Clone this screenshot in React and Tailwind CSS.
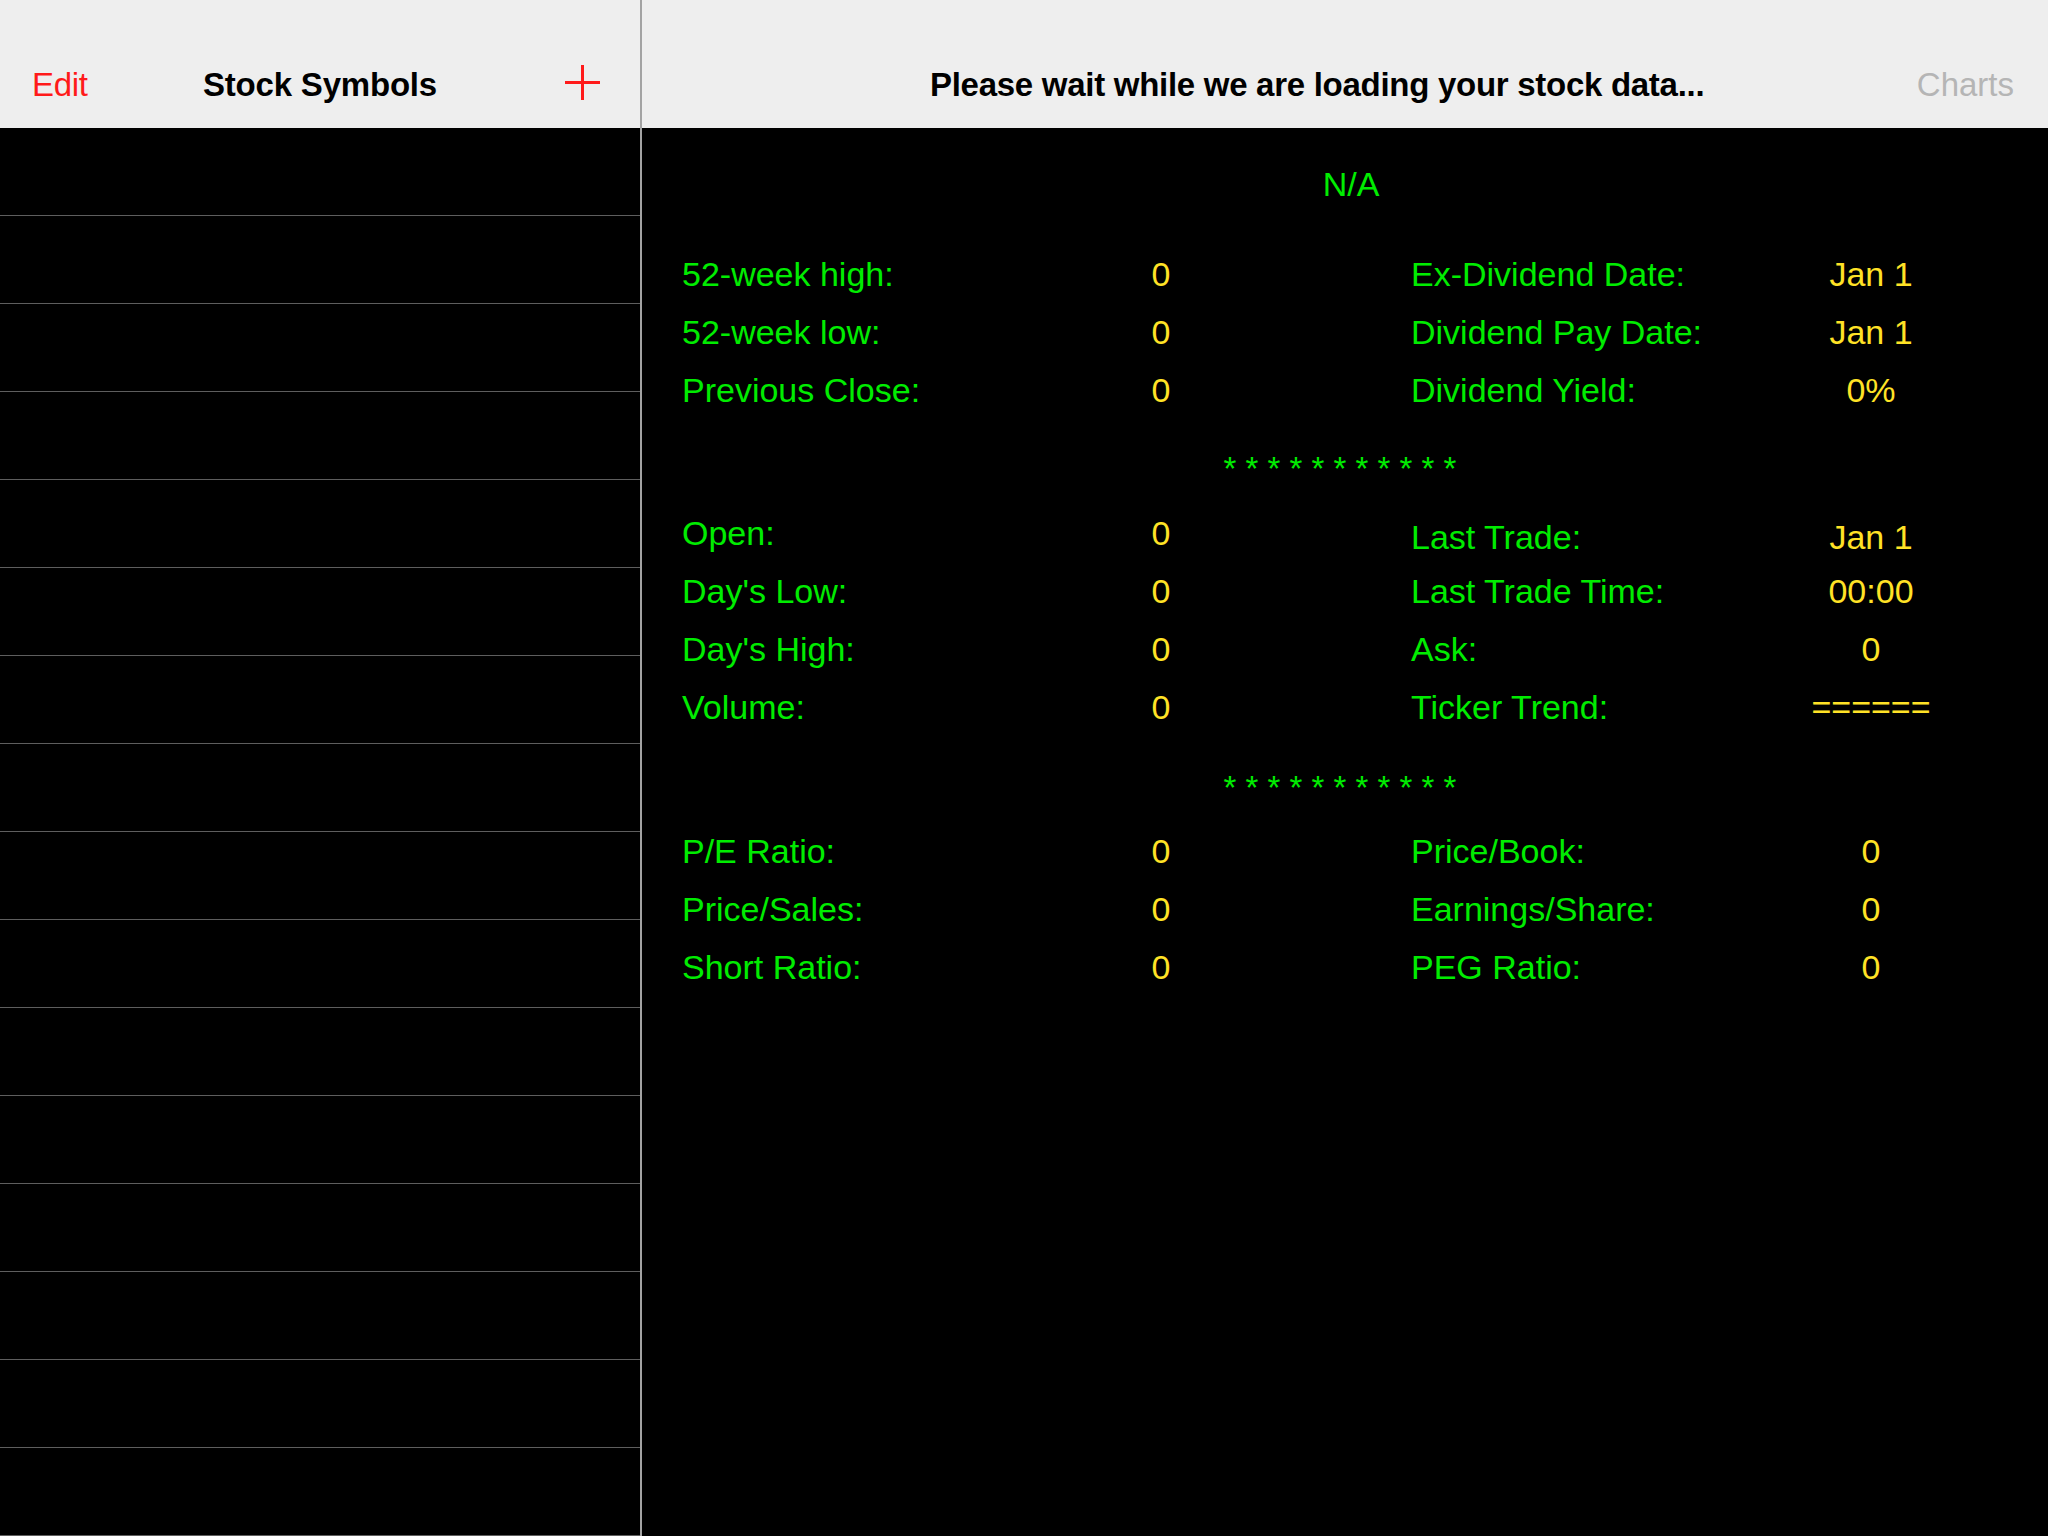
import React from 'react';

const GREEN = 'text-[#00ec00]';
const YELLOW = 'text-[#ffe226]';

const groups = [
  [
    ['52-week high:', '0', 'Ex-Dividend Date:', 'Jan 1'],
    ['52-week low:', '0', 'Dividend Pay Date:', 'Jan 1'],
    ['Previous Close:', '0', 'Dividend Yield:', '0%'],
  ],
  [
    ['Open:', '0', 'Last Trade:', 'Jan 1'],
    ["Day's Low:", '0', 'Last Trade Time:', '00:00'],
    ["Day's High:", '0', 'Ask:', '0'],
    ['Volume:', '0', 'Ticker Trend:', '======'],
  ],
  [
    ['P/E Ratio:', '0', 'Price/Book:', '0'],
    ['Price/Sales:', '0', 'Earnings/Share:', '0'],
    ['Short Ratio:', '0', 'PEG Ratio:', '0'],
  ],
];

function Group({ rows, className = '', lowFirstRight = false }) {
  return (
    <div className={`grid grid-cols-[399px_160px_170px_380px_160px] pl-[40px] text-[34px] leading-[58px] ${className}`}>
      {rows.map((r, i) => {
        // the right column's first row sits a few px lower in the second block
        const shift = lowFirstRight && i === 0 ? 'h-[58px] leading-[66px]' : '';
        return (
          <React.Fragment key={i}>
            <div className={GREEN}>{r[0]}</div>
            <div className={`${YELLOW} text-center`}>{r[1]}</div>
            <div />
            <div className={`${GREEN} ${shift}`}>{r[2]}</div>
            <div className={`${YELLOW} text-center ${shift}`}>{r[3]}</div>
          </React.Fragment>
        );
      })}
    </div>
  );
}

function Stars({ className = '' }) {
  return (
    <div className={`h-[33px] pr-[10px] text-center text-[33px] leading-[33px] ${GREEN} ${className}`}>
      * * * * * * * * * * *
    </div>
  );
}

export default function App() {
  return (
    <div className="flex h-[1536px] w-[2048px] overflow-hidden bg-black font-['Liberation_Sans',Arial,sans-serif]">
      {/* symbol list */}
      <div className="flex w-[640px] flex-col">
        <div className="flex h-[128px] items-end bg-[#eeeeee]">
          <div className="grid h-[86px] w-full grid-cols-[1fr_auto_1fr] items-center">
            <span className="pl-[32px] text-[33px] tracking-[-0.3px] text-[#ff1a1a]">Edit</span>
            <span className="text-[33px] font-bold tracking-[-0.2px] text-black">Stock Symbols</span>
            <div className="flex justify-end pr-[39px]">
              <svg width="37" height="37" viewBox="0 0 37 37" className="mb-[6px]">
                <path d="M18.5 1v35M1 18.5h35" stroke="#ff1a1a" strokeWidth="3" fill="none" />
              </svg>
            </div>
          </div>
        </div>
        {Array.from({ length: 16 }).map((_, i) => (
          <div key={i} className="h-[88px] border-b border-[#5e5e5e]" />
        ))}
      </div>

      <div className="w-[2px] bg-[#a3a3a3]" />

      {/* detail */}
      <div className="flex flex-1 flex-col">
        <div className="flex h-[128px] items-end bg-[#eeeeee]">
          <div className="flex h-[86px] w-full items-center">
            <span className="pl-[288px] text-[33px] font-bold tracking-[-0.28px] text-black">
              Please wait while we are loading your stock data...
            </span>
            <span className="ml-auto pr-[34px] text-[33px] text-[#b5b5b5]">Charts</span>
          </div>
        </div>

        <div className={`pl-[12px] pt-[27px] text-center text-[34px] leading-[58px] ${GREEN}`}>N/A</div>
        <Group rows={groups[0]} className="mt-[32px]" />
        <Stars className="mt-[33px]" />
        <Group rows={groups[1]} className="mt-[19px]" lowFirstRight />
        <Stars className="mt-[35px]" />
        <Group rows={groups[2]} className="mt-[18px]" />
      </div>
    </div>
  );
}
